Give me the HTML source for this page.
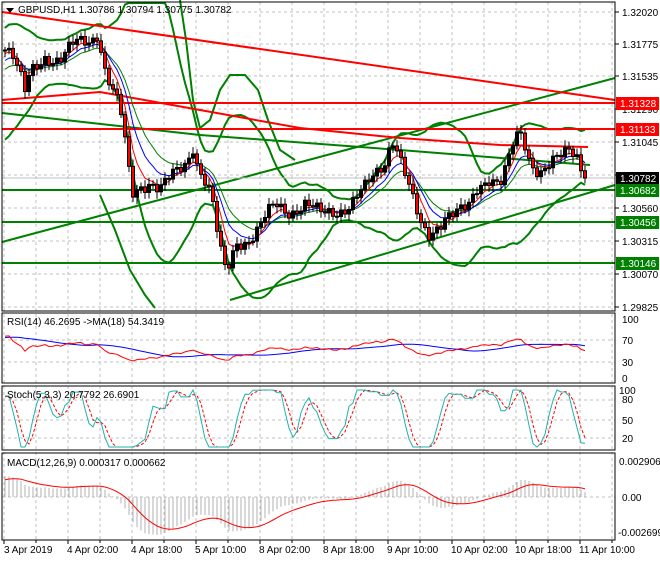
<!DOCTYPE html><html><head><meta charset="utf-8"><style>
body{margin:0;background:#fff;width:660px;height:560px;overflow:hidden;font-family:"Liberation Sans",sans-serif}
svg text{font-family:"Liberation Sans",sans-serif;font-size:10px}
</style></head><body>
<svg id="s" width="660" height="560" xmlns="http://www.w3.org/2000/svg"></svg>
<script>
var o=[];
function L(x1,y1,x2,y2,c,w,d){o.push('<line x1="'+x1+'" y1="'+y1+'" x2="'+x2+'" y2="'+y2+'" stroke="'+c+'" stroke-width="'+(w||1)+'"'+(d?' stroke-dasharray="'+d+'"':'')+'/>');}
function P(pts,c,w,d){o.push('<polyline fill="none" points="'+pts.map(function(p){return p[0].toFixed(1)+','+p[1].toFixed(1)}).join(' ')+'" stroke="'+c+'" stroke-width="'+(w||1)+'"'+(d?' stroke-dasharray="'+d+'"':'')+'/>');}
function T(x,y,t,c,a){o.push('<text x="'+x+'" y="'+y+'" fill="'+(c||'#000')+'"'+(a?' text-anchor="'+a+'"':'')+'>'+t+'</text>');}
function R(x,y,w,h,f,s){o.push('<rect x="'+x+'" y="'+y+'" width="'+w+'" height="'+h+'" fill="'+f+'"'+(s?' stroke="'+s+'"':'')+'/>');}
var panels=[[2,2,311],[2,313,383],[2,386,450],[2,453,540]];
var gy=[12,44,76,109,142,175,208,241,274,307];
gy.forEach(function(y){L(2,y,615,y,'#c0c0c0',1,'3,3')});
[340,362].forEach(function(y){L(2,y,615,y,'#c0c0c0',1,'3,3')});
[400,420,438].forEach(function(y){L(2,y,615,y,'#c0c0c0',1,'3,3')});
[497].forEach(function(y){L(2,y,615,y,'#c0c0c0',1,'3,3')});
for(var x=4;x<615;x+=32){L(x,2,x,540,'#c0c0c0',1,'3,3')}
var K=[[-80,130],[-40,95],[-10,55],[3,40],[15,60],[25,95],[30,75],[45,55],[60,60],[75,45],[90,40],[98,30],[104,65],[112,90],[120,110],[126,150],[132,195],[140,185],[150,180],[160,190],[170,180],[180,170],[188,160],[192,140],[198,165],[205,180],[212,200],[218,240],[224,270],[230,265],[236,240],[245,240],[255,235],[265,220],[275,205],[290,210],[305,205],[320,215],[335,210],[350,205],[365,190],[375,175],[385,160],[392,135],[398,150],[405,175],[412,200],[420,225],[428,235],[436,225],[446,215],[458,215],[468,210],[478,185],[490,175],[500,185],[508,165],[515,140],[522,135],[530,160],[540,170],[550,165],[560,160],[570,150],[578,155],[585,178]];
function interp(x){for(var i=1;i<K.length;i++){if(x<=K[i][0]){var a=K[i-1],b=K[i];return a[1]+(b[1]-a[1])*(x-a[0])/(b[0]-a[0]);}}return K[K.length-1][1];}
var allx=[],allc=[];
for(var x=-79;x<=585;x+=4){allx.push(x);allc.push(interp(x)+6*Math.sin(x*1.7)+4*Math.sin(x*0.53));}
allc[allc.length-1]=178;
var W=21;
var xs=allx.slice(W),cl=allc.slice(W);
function ema(a,n){var k=2/(n+1),r=[a[0]];for(var i=1;i<a.length;i++)r.push(r[i-1]+k*(a[i]-r[i-1]));return r;}
function cut(a){return a.slice(W)}
P([[2,242],[615,78]],'#008000',2);
P([[230,300],[615,185]],'#008000',2);
P([[2,113],[200,135],[400,150],[590,165]],'#008000',2);
[190,222,263].forEach(function(y){L(2,y,615,y,'#008000',2)});
var up=[],dn=[];for(var i=0;i<allc.length;i++){var s=0,n=0;for(var j=Math.max(0,i-19);j<=i;j++){s+=allc[j];n++}var m=s/n,v=0;for(var j=Math.max(0,i-19);j<=i;j++)v+=(allc[j]-m)*(allc[j]-m);var sd=Math.sqrt(v/n);up.push(m-2.2*sd);dn.push(m+2.2*sd);}
up=cut(up);dn=cut(dn);
P(xs.map(function(x,i){return[x,Math.max(up[i],3)]}),'#008000',2);
P(xs.map(function(x,i){return[x,Math.min(dn[i],310)]}),'#008000',2);
P([[180,0],[186,40],[193,100],[200,128],[210,120],[220,90],[230,75],[245,75],[258,90],[268,120],[280,150],[295,160]],'#008000',2);
P([[100,195],[115,230],[130,270],[145,295],[155,308]],'#008000',2);
P([[2,100],[100,92],[200,110],[300,128],[400,138],[500,145],[588,147]],'#ff0000',2);
P([[2,12],[615,100]],'#ff0000',2);
L(2,103,615,103,'#ff0000',2);L(2,129,615,129,'#ff0000',2);
L(2,178,615,178,'#c0c0c0',1);
var e1=cut(ema(allc,5)),e2=cut(ema(allc,9)),e3=cut(ema(allc,14));
P(xs.map(function(x,i){return[x,e3[i]]}),'#008000',1);
P(xs.map(function(x,i){return[x,e2[i]]}),'#0000ff',1);
P(xs.map(function(x,i){return[x,e1[i]]}),'#ff0000',1);
for(var i=0;i<xs.length;i++){var op=allc[i+W-1],c=cl[i],x=xs[i];var hi=Math.min(op,c)-3-4*Math.abs(Math.sin(i*2.3)),lo=Math.max(op,c)+3+4*Math.abs(Math.cos(i*1.9));
L(x,hi,x,lo,'#000',1);var t=Math.min(op,c),h=Math.max(Math.abs(op-c),1);R(x-1.5,t,3,h,c>op?'#ff0000':'#000','#000');}
var pr=allc.map(function(v){return -v});
var rsi=[],ag=0.5,al=0.5;for(var i=0;i<pr.length;i++){var d=i?pr[i]-pr[i-1]:0;ag=(ag*13+Math.max(d,0))/14;al=(al*13+Math.max(-d,0))/14;rsi.push(100*ag/(ag+al));}
var rma=[];for(var i=0;i<rsi.length;i++){var s=0,n=0;for(var j=Math.max(0,i-17);j<=i;j++){s+=rsi[j];n++}rma.push(s/n);}
rsi=rsi.map(function(v,i){return 50+(v-50)*0.6});rma=rma.map(function(v){return 50+(v-50)*0.6});
rsi=cut(rsi);rma=cut(rma);
function ry(v){return 378-v*0.59}
P(xs.map(function(x,i){return[x,ry(rma[i])]}),'#0000ff',1);
P(xs.map(function(x,i){return[x,ry(rsi[i])]}),'#ff0000',1);
var kk=[];for(var i=0;i<pr.length;i++){var h=-1e9,l=1e9;for(var j=Math.max(0,i-4);j<=i;j++){h=Math.max(h,pr[j]);l=Math.min(l,pr[j])}kk.push(h>l?100*(pr[i]-l)/(h-l):50);}
var ks=[],ds=[];for(var i=0;i<kk.length;i++){var s=0,n=0;for(var j=Math.max(0,i-2);j<=i;j++){s+=kk[j];n++}ks.push(s/n);}
for(var i=0;i<ks.length;i++){var s=0,n=0;for(var j=Math.max(0,i-2);j<=i;j++){s+=ks[j];n++}ds.push(s/n);}
ks=cut(ks);ds=cut(ds);
function sy(v){return 447-v*0.57}
P(xs.map(function(x,i){return[x,sy(ds[i])]}),'#ff0000',1,'3,2');
P(xs.map(function(x,i){return[x,sy(ks[i])]}),'#20b2aa',1);
var ef=ema(pr,12),es=ema(pr,26),md=ef.map(function(v,i){return v-es[i]}),sg=ema(md,9);
md=cut(md);sg=cut(sg);
var mx=0;md.forEach(function(v){mx=Math.max(mx,Math.abs(v))});
function my(v){return 497-v/mx*38}
for(var i=0;i<xs.length;i++){L(xs[i],497,xs[i],my(md[i]),'#b0b0b0',1)}
P(xs.map(function(x,i){return[x,my(sg[i])]}),'#ff0000',1);
panels.forEach(function(p){R(p[0],p[1],613,p[2]-p[1],'none','#000')});
var lab=['1.32020','1.31775','1.31535','1.31290','1.31045','1.30800','1.30560','1.30315','1.30070','1.29825'];
lab.forEach(function(t,i){L(615,gy[i],619,gy[i],'#000');T(622,gy[i]+4,t)});
function B(y,t,c){R(616,y-6,43,13,c);T(620,y+4,t,'#fff')}
B(103,'1.31328','#ff0000');B(129,'1.31133','#ff0000');B(178,'1.30782','#000');B(190,'1.30682','#008000');B(222,'1.30456','#008000');B(263,'1.30146','#008000');
T(622,323,'100');T(622,344,'70');T(622,366,'30');T(622,382,'0');
T(619,394,'100');T(622,403,'80');T(622,424,'50');T(622,442,'20');
T(619,465,'0.002906');T(622,501,'0.00');T(618,536,'-0.002699');
var tl=['3 Apr 2019','4 Apr 02:00','4 Apr 18:00','5 Apr 10:00','8 Apr 02:00','8 Apr 18:00','9 Apr 10:00','10 Apr 02:00','10 Apr 18:00','11 Apr 10:00'];
tl.forEach(function(t,i){var x=4+64*i;L(x,540,x,544,'#000');T(i?x-1:x,553,t)});
for(var x=36;x<615;x+=64)L(x,540,x,543,'#000');
o.push('<polygon points="6,8 14,8 10,13" fill="#000"/>');
T(18,13,'GBPUSD,H1  1.30786 1.30794 1.30775 1.30782');
T(7,325,'RSI(14) 46.2695  -&gt;MA(18) 54.3419');
T(7,398,'Stoch(5,3,3) 20.7792 26.6901');
T(7,466,'MACD(12,26,9) 0.000317 0.000662');
document.getElementById('s').innerHTML=o.join('');
</script>
</body></html>
